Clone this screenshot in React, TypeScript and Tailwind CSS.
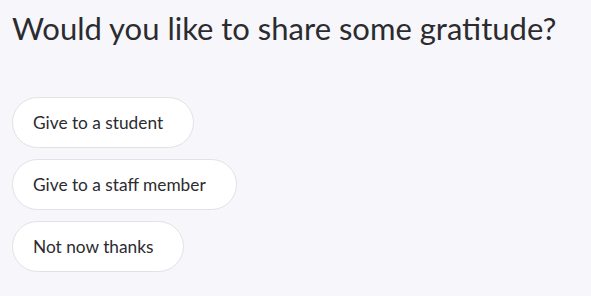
const options = ['Give to a student', 'Give to a staff member', 'Not now thanks'];

export default function App() {
  return (
    <div
      className="min-h-screen bg-[#f7f7fb] px-3 pt-[8px] text-[#2b2b30]"
      style={{ fontFamily: 'Lato, "Noto Sans", sans-serif' }}
    >
      <h1 className="text-[31px] leading-[40px] font-normal">Would you like to share some gratitude?</h1>

      <div className="mt-[49px] flex flex-col items-start gap-[11px]">
        {options.map((label) => (
          <button
            key={label}
            className="h-[51px] rounded-full border border-[#e2e2e6] bg-white pl-[20px] pr-[30px] text-[17.3px] text-[#2b2b30]"
          >
            {label}
          </button>
        ))}
      </div>
    </div>
  );
}
